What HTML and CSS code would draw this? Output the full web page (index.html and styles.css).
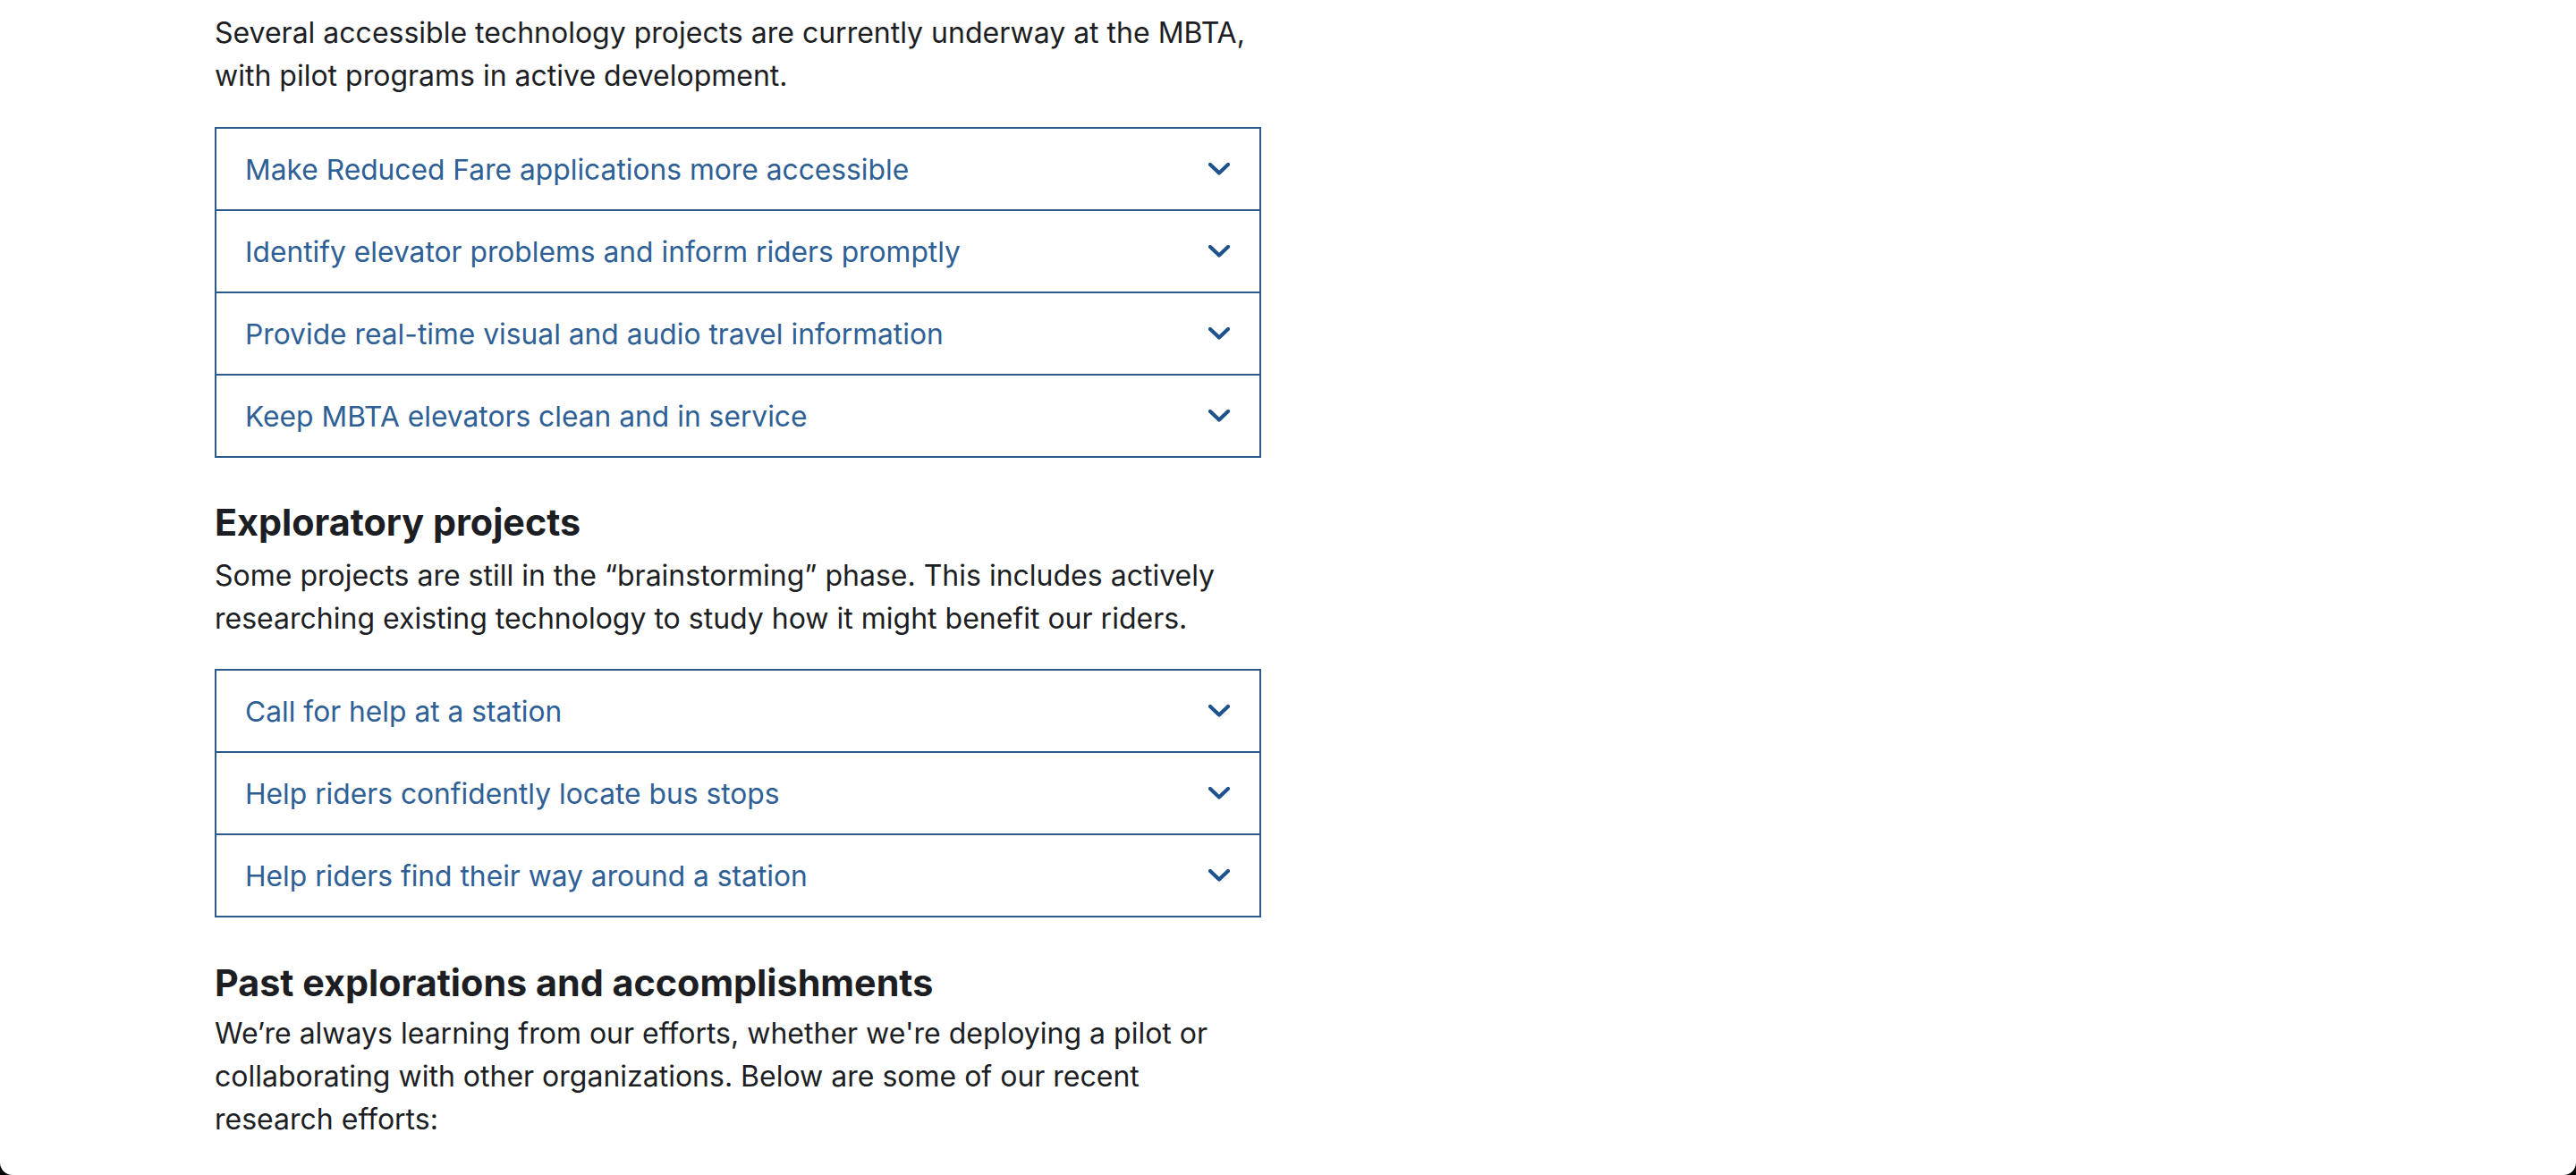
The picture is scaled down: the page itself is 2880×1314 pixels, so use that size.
FILE: index.html
```html
<!DOCTYPE html>
<html lang="en">
<head>
<meta charset="utf-8">
<title>Accessible technology projects</title>
<link rel="stylesheet" href="styles.css">
</head>
<body>
<div class="window">
  <main class="content">
    <p class="para para-first">Several accessible technology projects are currently underway at the MBTA, with pilot programs in active development.</p>
    <div class="accordion accordion-first">
      <div class="acc-row"><span class="acc-title">Make Reduced Fare applications more accessible</span><svg class="chev" viewBox="0 0 24 14" width="24" height="14"><polyline points="2,2 12,11.5 22,2"/></svg></div>
      <div class="acc-row"><span class="acc-title">Identify elevator problems and inform riders promptly</span><svg class="chev" viewBox="0 0 24 14" width="24" height="14"><polyline points="2,2 12,11.5 22,2"/></svg></div>
      <div class="acc-row"><span class="acc-title">Provide real-time visual and audio travel information</span><svg class="chev" viewBox="0 0 24 14" width="24" height="14"><polyline points="2,2 12,11.5 22,2"/></svg></div>
      <div class="acc-row"><span class="acc-title">Keep MBTA elevators clean and in service</span><svg class="chev" viewBox="0 0 24 14" width="24" height="14"><polyline points="2,2 12,11.5 22,2"/></svg></div>
    </div>

    <h2 class="heading heading-explore">Exploratory projects</h2>
    <p class="para para-explore">Some projects are still in the “brainstorming” phase. This includes actively researching existing technology to study how it might benefit our riders.</p>
    <div class="accordion accordion-second">
      <div class="acc-row"><span class="acc-title">Call for help at a station</span><svg class="chev" viewBox="0 0 24 14" width="24" height="14"><polyline points="2,2 12,11.5 22,2"/></svg></div>
      <div class="acc-row"><span class="acc-title">Help riders confidently locate bus stops</span><svg class="chev" viewBox="0 0 24 14" width="24" height="14"><polyline points="2,2 12,11.5 22,2"/></svg></div>
      <div class="acc-row"><span class="acc-title">Help riders find their way around a station</span><svg class="chev" viewBox="0 0 24 14" width="24" height="14"><polyline points="2,2 12,11.5 22,2"/></svg></div>
    </div>

    <h2 class="heading heading-past">Past explorations and accomplishments</h2>
    <p class="para para-past">We’re always learning from our efforts, whether we're deploying a pilot or collaborating with other organizations. Below are some of our recent research efforts:</p>
  </main>
</div>
</body>
</html>
```

FILE: styles.css
```css
html, body {
  margin: 0;
  padding: 0;
  background: #000;
}

body {
  font-family: Inter, "Noto Sans", "Liberation Sans", sans-serif;
  color: #1c1e23;
}

.window {
  background: #fff;
  height: 1314px;
  border-radius: 0 0 14px 14px;
  overflow: hidden;
}

.content {
  width: 1170px;
  padding: 13px 0 0 240px;
}

.para {
  margin: 0;
  font-size: 32px;
  line-height: 48px;
  max-width: 1170px;
}

.accordion {
  border-top: 2px solid #2b5a8c;
  border-left: 2px solid #2b5a8c;
  border-right: 2px solid #2b5a8c;
}

.accordion-first {
  margin-top: 33px;
}

.accordion-second {
  margin-top: 32px;
}

.acc-row {
  height: 90px;
  border-bottom: 2px solid #2b5a8c;
  display: flex;
  align-items: center;
  justify-content: space-between;
  padding: 0 33px 0 32px;
}

.acc-title {
  font-size: 31.75px;
  color: #2e6096;
}

.chev {
  display: block;
  fill: none;
  stroke: #1f5390;
  stroke-width: 4.2;
  stroke-linecap: round;
  stroke-linejoin: round;
}

.heading {
  margin: 0;
  font-size: 41.3px;
  line-height: 48px;
  font-weight: 700;
}

.heading-explore {
  margin-top: 48px;
}

.para-explore {
  margin-top: 12px;
}

.heading-past {
  margin-top: 49px;
}

.para-past {
  margin-top: 9px;
}
```
